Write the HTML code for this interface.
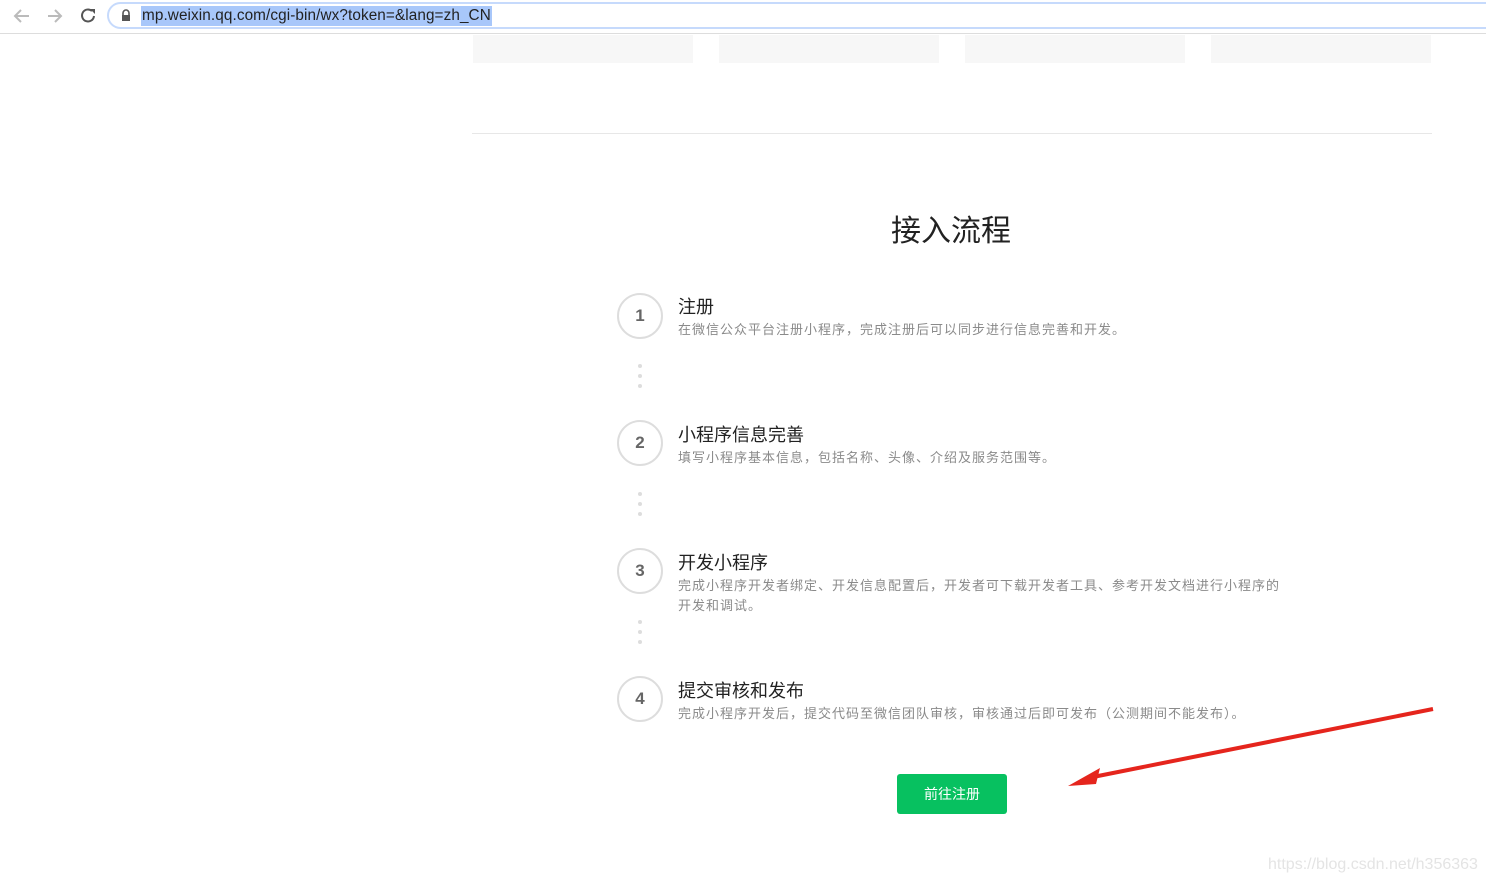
<!DOCTYPE html>
<html><head><meta charset="utf-8"><style>
body{margin:0;width:1486px;height:884px;background:#fff;position:relative;overflow:hidden;font-family:"Liberation Sans","Noto Sans CJK SC",sans-serif}
.a{position:absolute}
.bar{left:0;top:0;width:1486px;height:33px;background:#fff;border-bottom:1px solid #ddd}
.url{left:107px;top:2px;width:1400px;height:27px;border:2px solid #c6dafc;border-radius:15px;box-sizing:border-box}
.sel{left:141px;top:6px;height:20px;background:#a8c7fa;font-size:15.3px;line-height:20px;color:#222;padding:0 1px;letter-spacing:0.1px}
.tile{top:35px;width:220px;height:28px;background:#f7f7f7}
.circ{left:617px;width:42px;height:42px;border:2px solid #ddd;border-radius:50%;text-align:center;line-height:42px;font-weight:bold;font-size:17px;color:#666}
.t{left:678px;font-size:18px;color:#222}
.d{left:678px;font-size:13px;color:#8a8a8a;line-height:20px;width:615px;letter-spacing:1px}
.dot{left:638px;width:4px;height:4px;border-radius:50%;background:#ddd}
</style></head><body>
<div class="a bar"></div>
<svg class="a" style="left:12px;top:7px" width="90" height="18"><g stroke="#bbb" stroke-width="2" fill="none"><path d="M17 9H4M9 3L3 9l6 6"/><path d="M36 9h13M43 3l6 6-6 6"/></g><path d="M80 4a6 6 0 1 0 2 5" stroke="#555" stroke-width="2" fill="none"/><path d="M78 2h5v5z" fill="#555"/></svg>
<div class="a url"></div>
<svg class="a" style="left:121px;top:9px" width="10" height="13"><path d="M2 6V4a3 3 0 0 1 6 0v2" stroke="#555" stroke-width="1.6" fill="none"/><rect x="1" y="6" width="8" height="6" fill="#555"/></svg>
<div class="a sel">mp.weixin.qq.com/cgi-bin/wx?token=&amp;lang=zh_CN</div>
<div class="a tile" style="left:473px"></div><div class="a tile" style="left:719px"></div><div class="a tile" style="left:965px"></div><div class="a tile" style="left:1211px"></div>
<div class="a" style="left:472px;top:133px;width:960px;height:1px;background:#e7e7e7"></div>
<div class="a" style="left:891px;top:206px;font-size:30px;color:#222">接入流程</div>
<div class="a circ" style="top:293px">1</div>
<div class="a t" style="top:293px">注册</div>
<div class="a d" style="top:320px">在微信公众平台注册小程序，完成注册后可以同步进行信息完善和开发。</div>
<div class="a dot" style="top:364px"></div><div class="a dot" style="top:374px"></div><div class="a dot" style="top:384px"></div>
<div class="a circ" style="top:420px">2</div>
<div class="a t" style="top:421px">小程序信息完善</div>
<div class="a d" style="top:448px">填写小程序基本信息，包括名称、头像、介绍及服务范围等。</div>
<div class="a dot" style="top:492px"></div><div class="a dot" style="top:502px"></div><div class="a dot" style="top:512px"></div>
<div class="a circ" style="top:548px">3</div>
<div class="a t" style="top:549px">开发小程序</div>
<div class="a d" style="top:576px">完成小程序开发者绑定、开发信息配置后，开发者可下载开发者工具、参考开发文档进行小程序的开发和调试。</div>
<div class="a dot" style="top:620px"></div><div class="a dot" style="top:630px"></div><div class="a dot" style="top:640px"></div>
<div class="a circ" style="top:676px">4</div>
<div class="a t" style="top:677px">提交审核和发布</div>
<div class="a d" style="top:704px;width:700px">完成小程序开发后，提交代码至微信团队审核，审核通过后即可发布（公测期间不能发布）。</div>
<div class="a" style="left:897px;top:774px;width:110px;height:40px;background:#07c160;border-radius:3px;color:#fff;font-size:14px;text-align:center;line-height:40px">前往注册</div>
<svg class="a" style="left:1060px;top:700px" width="380" height="95"><path d="M373 9L28 78" stroke="#e5251d" stroke-width="4"/><path d="M8 86L40 68 36 84z" fill="#e5251d"/></svg>
<div class="a" style="left:1268px;top:856px;font-size:16px;color:#e4e4e4">https://blog.csdn.net/h356363</div>
</body></html>
